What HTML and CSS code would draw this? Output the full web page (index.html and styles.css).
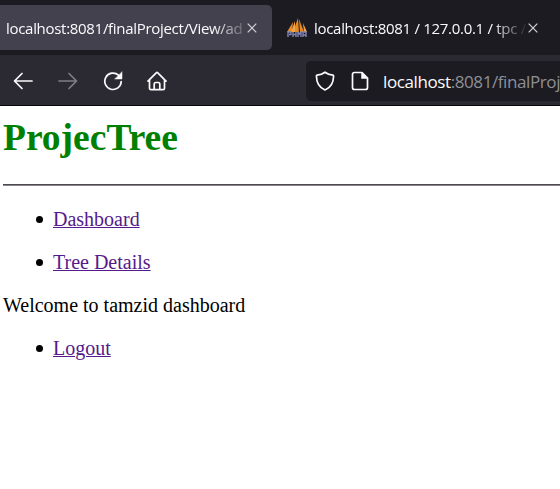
FILE: index.html
```
<!DOCTYPE html>
<html lang="en">
<head>
<meta charset="utf-8">
<title>ProjecTree</title>
<link rel="stylesheet" href="styles.css">
</head>
<body>
<div class="tabs">
  <div class="tab active">
    <span class="title first">localhost:8081/finalProject/View/ad</span>
    <svg class="close" viewBox="0 0 10 10"><path d="M.7.7l8.6 8.6M9.3.7L.7 9.3"/></svg>
  </div>
  <div class="tab other">
    <svg class="favicon" viewBox="0 0 20 20">
      <path fill="#e58a25" d="M0 14L6 4l-1 10zM6 14L11 0l1 14zM12 1l5 13h-4z"/>
      <path fill="#f5a544" d="M4 14L8 3v11zM16 5l4 9h-3z"/>
      <path class="mark" d="M1 19v-5h3v2.500H2M6 19v-5M6 16.500h3M9 14v5M11 19v-5l1.500 2 1.500-2v5M16 19v-5h3v5M16 17h3"/>
    </svg>
    <span class="title second">localhost:8081 / 127.0.0.1 / tpc /</span>
    <svg class="close" viewBox="0 0 10 10"><path d="M.7.7l8.6 8.6M9.3.7L.7 9.3"/></svg>
  </div>
</div>
<div class="toolbar">
  <svg class="icon" viewBox="0 0 20 20"><path d="M19 10H2M9 2.500L1.500 10 9 17.500"/></svg>
  <svg class="icon disabled" viewBox="0 0 20 20"><path d="M1 10h17M11 2.500l7.500 7.500-7.500 7.500"/></svg>
  <svg class="icon" viewBox="0 0 20 20"><path d="M18.200 10.500A8.200 8.200 0 1 1 15.500 4.200"/><path class="solid" d="M19 1v7h-7z"/></svg>
  <svg class="icon" viewBox="0 0 20 20"><path d="M1 10.200l8.200-8.400q.8-.7 1.600 0l8.200 8.400M2.500 9v8.200q0 1.500 1.500 1.500h12q1.500 0 1.500-1.500V9M7.200 18.500V13q0-1.500 1.500-1.500h2.600q1.500 0 1.500 1.500v5.500"/></svg>
  <div class="address">
    <svg class="icon shield" viewBox="0 0 20 20"><path d="M10 1.200Q13.500 3.800 18 4.200q.6 0 .6.8C18.500 11.500 16 16.500 10 19 4 16.500 1.500 11.500 1.400 5q0-.8.6-.8Q6.500 3.800 10 1.200z"/></svg>
    <svg class="icon page" viewBox="0 0 20 20"><path d="M4.500 1.500h7.500l5.500 5.500v9.500q0 2-2 2h-11q-2 0-2-2v-13q0-2 2-2z"/><path class="solid" d="M11.500 1.500v6h6z"/></svg>
    <span class="url"><b>localhost</b>:8081/finalProj</span>
  </div>
</div>
<main>
  <h1>ProjecTree</h1>
  <hr>
  <ul><li><a href="#">Dashboard</a></li></ul>
  <ul><li><a href="#">Tree Details</a></li></ul>
  <p>Welcome to tamzid dashboard</p>
  <ul><li><a href="#">Logout</a></li></ul>
</main>
</body>
</html>
```
FILE: styles.css
```
* { box-sizing: border-box; }
body {
  margin: 0;
  height: 489px;
  overflow: hidden;
  background: #fff;
  font-family: "Liberation Serif", serif;
  font-size: 20px;
  line-height: 23px;
}
svg { display: block; flex: none; fill: none; }
.tabs {
  display: flex;
  height: 55px;
  padding: 5px 0;
  background: #1c1b22;
  color: #fbfbfe;
  font-family: "Open Sans", sans-serif;
  font-size: 15px;
}
.tab { display: flex; align-items: center; flex: none; height: 45px; }
.active { width: 272px; padding-left: 6px; background: #42414d; border-radius: 0 5px 5px 0; }
.other { padding-left: 15px; }
.title { flex: none; overflow: hidden; white-space: nowrap; line-height: 24px; }
.first {
  width: 241px;
  letter-spacing: -0.3px;
  mask-image: linear-gradient(to right, #000 207px, transparent 245px);
}
.second {
  width: 214px;
  letter-spacing: -0.3px;
  mask-image: linear-gradient(to right, #000 178px, transparent 214px);
}
.close { width: 10px; height: 10px; stroke: #d5d5da; stroke-width: 1.2; }
.favicon { width: 20px; height: 20px; margin-right: 7px; }
.mark { stroke: #8185b5; stroke-width: 1.4; }
.toolbar {
  display: flex;
  align-items: center;
  gap: 25px;
  height: 51px;
  padding: 1px 0 0 13px;
  background: #2b2a33;
  border-bottom: 1px solid #08080b;
}
.icon {
  width: 20px;
  height: 20px;
  stroke: #fbfbfe;
  stroke-width: 1.7;
  stroke-linecap: round;
  stroke-linejoin: round;
}
.toolbar > .icon:nth-child(4) { margin-left: -1px; }
.icon .solid { fill: #fbfbfe; stroke-width: .5; }
.disabled { opacity: .4; }
.address {
  display: flex;
  align-items: center;
  flex: 1;
  min-width: 0;
  height: 40px;
  margin-left: 114px;
  padding-left: 9px;
  background: #1c1b22;
  border-radius: 5px 0 0 5px;
  overflow: hidden;
}
.page { margin: 0 13px 0 15px; }
.url {
  color: #8f8f96;
  font-family: "Open Sans", sans-serif;
  font-size: 17px;
  letter-spacing: -0.4px;
  white-space: nowrap;
  margin-top: 1px;
}
.url b { color: #fbfbfe; font-weight: 400; }
main { padding: 9px 0 0 3px; }
h1 { margin: 0 0 23px; color: #008000; font-size: 37.5px; line-height: 46px; }
hr { height: 2px; margin: 0 0 22px; border: 0; border-top: 1px solid #4d494f; background: #858288; }
ul, p { margin: 0 0 20px; }
ul { padding-left: 33px; list-style: none; }
li { display: flex; }
li::before {
  content: "";
  width: 7px;
  height: 7px;
  margin: 8px 10px 0 0;
  border-radius: 50%;
  background: #000;
}
a { color: #551a8b; text-decoration-thickness: 1px; text-underline-offset: 1px; }
```
